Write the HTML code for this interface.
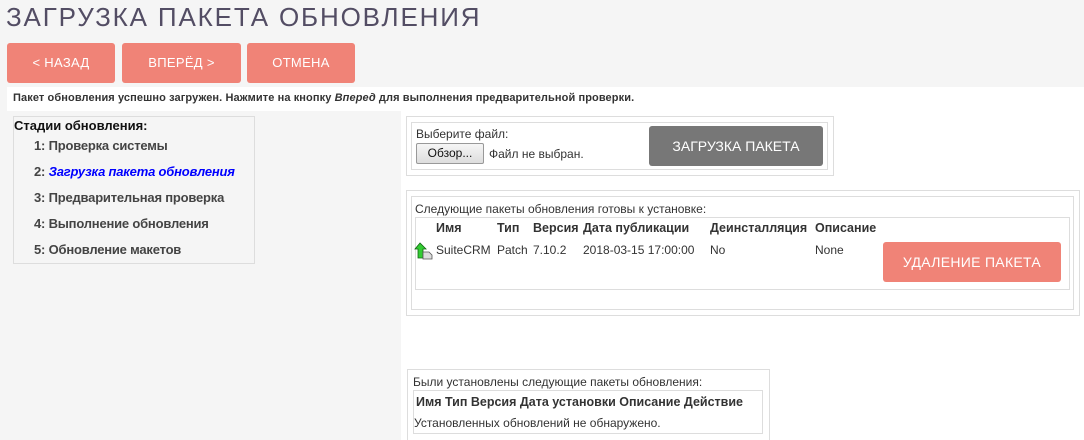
<!DOCTYPE html>
<html><head><meta charset="utf-8"><style>
*{margin:0;padding:0;box-sizing:border-box}
html,body{width:1084px;height:440px;overflow:hidden}
body{background:#f5f5f5;position:relative;font-family:"Liberation Sans","Noto Sans CJK SC",sans-serif;}
.a{position:absolute;white-space:nowrap}
.btn{position:absolute;background:#f08377;color:#fff;border-radius:3px;font-size:13px;text-align:center;letter-spacing:.3px}
.box{position:absolute;border:1px solid #ddd}
.t12{font-size:12px;color:#333}
.h{font-size:12.5px;color:#333;font-weight:bold}
.b{font-weight:bold}
</style></head><body>
<div class="a" style="left:6px;top:2px;font-size:26px;color:#534d64;letter-spacing:1.85px">ЗАГРУЗКА ПАКЕТА ОБНОВЛЕНИЯ</div>
<div class="btn" style="left:7px;top:43px;width:108px;height:40px;line-height:40px">&lt; НАЗАД</div>
<div class="btn" style="left:122px;top:43px;width:119px;height:40px;line-height:40px">ВПЕРЁД &gt;</div>
<div class="btn" style="left:247px;top:43px;width:108px;height:40px;line-height:40px">ОТМЕНА</div>
<div class="a" style="left:7px;top:87px;width:1077px;height:353px;background:#fff"></div>
<div class="a" style="left:7px;top:111px;width:394px;height:329px;background:#f5f5f5"></div>
<div class="a b" style="left:13px;top:92px;font-size:11px;color:#333;letter-spacing:.1px">Пакет обновления успешно загружен. Нажмите на кнопку <i>Вперед</i> для выполнения предварительной проверки.</div>
<div class="box" style="left:13px;top:116px;width:242px;height:148px"></div>
<div class="a b" style="left:14px;top:118px;font-size:13px;color:#111">Стадии обновления:</div>
<div class="a b" style="left:34px;top:138px;font-size:13px;color:#444;letter-spacing:-.2px">1: Проверка системы</div>
<div class="a b" style="left:34px;top:164px;font-size:13px;color:#444;letter-spacing:-.2px">2: <i style="color:#0000ff">Загрузка пакета обновления</i></div>
<div class="a b" style="left:34px;top:190px;font-size:13px;color:#444;letter-spacing:-.2px">3: Предварительная проверка</div>
<div class="a b" style="left:34px;top:216px;font-size:13px;color:#444;letter-spacing:-.2px">4: Выполнение обновления</div>
<div class="a b" style="left:34px;top:242px;font-size:13px;color:#444;letter-spacing:-.2px">5: Обновление макетов</div>

<div class="box" style="left:406px;top:116px;width:428px;height:60px"></div>
<div class="box" style="left:411px;top:122px;width:417px;height:48px"></div>
<div class="a t12" style="left:416px;top:127px">Выберите файл:</div>
<div class="a" style="left:416px;top:143px;width:68px;height:21px;border:1px solid #999;border-radius:2px;background:linear-gradient(#f6f6f6,#ddd);font-size:12px;text-align:center;line-height:19px;color:#111">Обзор...</div>
<div class="a t12" style="left:489px;top:147px">Файл не выбран.</div>
<div class="a" style="left:649px;top:126px;width:174px;height:40px;background:#777;border-radius:3px;color:#fff;font-size:14px;text-align:center;line-height:40px">ЗАГРУЗКА ПАКЕТА</div>

<div class="box" style="left:406px;top:190px;width:674px;height:126px"></div>
<div class="box" style="left:411px;top:196px;width:663px;height:114px"></div>
<div class="a t12" style="left:415px;top:202px">Следующие пакеты обновления готовы к установке:</div>
<div class="box" style="left:415px;top:217px;width:655px;height:73px"></div>
<div class="a h" style="left:436px;top:221px">Имя</div>
<div class="a h" style="left:497px;top:221px">Тип</div>
<div class="a h" style="left:533px;top:221px">Версия</div>
<div class="a h" style="left:583px;top:221px">Дата публикации</div>
<div class="a h" style="left:710px;top:221px">Деинсталляция</div>
<div class="a h" style="left:815px;top:221px">Описание</div>
<svg class="a" style="left:414px;top:242px" width="20" height="18" viewBox="0 0 20 18"><path d="M6 1L1 7h3v9h5V7h3z" fill="#3c3" stroke="#161" stroke-width=".8"/><path d="M9 10h6l3 3v4H9z" fill="#ddd" stroke="#555" stroke-width=".8"/></svg>
<div class="a t12" style="left:436px;top:243px">SuiteCRM</div>
<div class="a t12" style="left:497px;top:243px">Patch</div>
<div class="a t12" style="left:533px;top:243px">7.10.2</div>
<div class="a t12" style="left:583px;top:243px">2018-03-15 17:00:00</div>
<div class="a t12" style="left:710px;top:243px">No</div>
<div class="a t12" style="left:815px;top:243px">None</div>
<div class="btn" style="left:883px;top:242px;width:178px;height:40px;line-height:40px;font-size:14px">УДАЛЕНИЕ ПАКЕТА</div>

<div class="box" style="left:407px;top:369px;width:363px;height:75px"></div>
<div class="a t12" style="left:413px;top:375px">Были установлены следующие пакеты обновления:</div>
<div class="box" style="left:413px;top:390px;width:350px;height:44px"></div>
<div class="a h" style="left:416px;top:395px">Имя Тип Версия Дата установки Описание Действие</div>
<div class="a t12" style="left:414px;top:416px">Установленных обновлений не обнаружено.</div>
</body></html>
